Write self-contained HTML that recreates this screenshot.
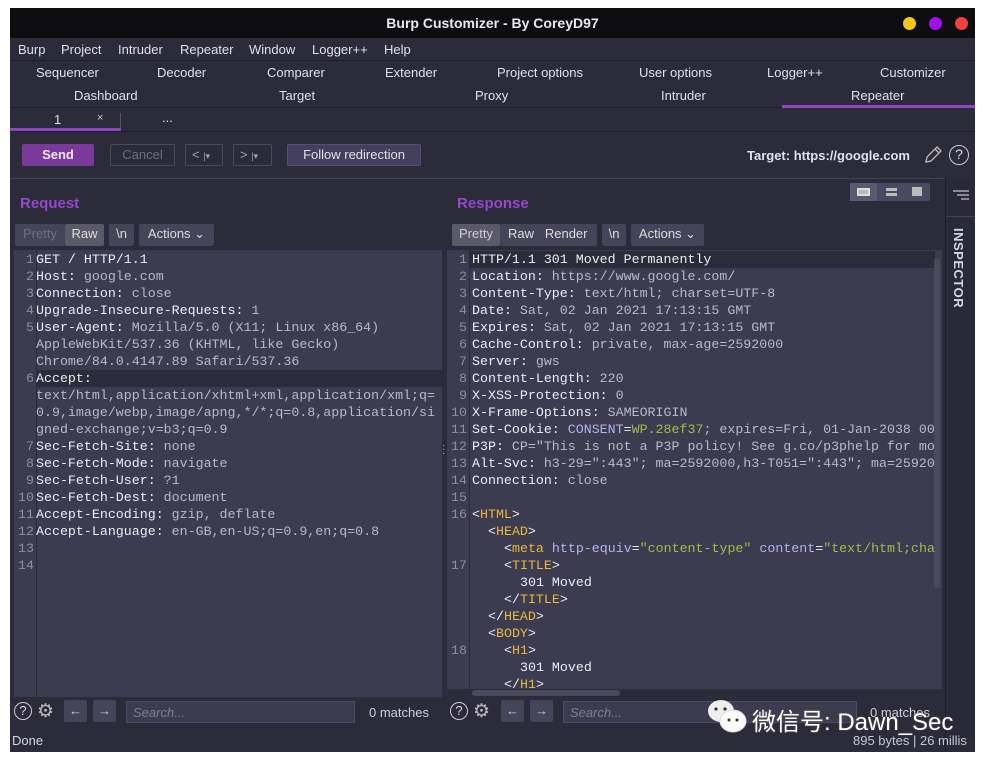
<!DOCTYPE html>
<html><head><meta charset="utf-8"><style>
*{margin:0;padding:0;box-sizing:border-box}
body{width:985px;height:763px;background:#fff;position:relative;overflow:hidden;font-family:"Liberation Sans",sans-serif;font-size:13px;color:#d8d8e2}
.a{position:absolute;white-space:nowrap}
.win{position:absolute;left:10px;top:8px;width:965px;height:744px;background:#2c2b3a;overflow:hidden}
.mono{font-family:"Liberation Mono","DejaVu Sans Mono",monospace;font-size:13.3px;line-height:17px}
.btn{position:absolute;height:22px;border:1px solid #4a4960;border-radius:2px;text-align:center;line-height:20px}
.ed{position:absolute;background:#3c3b50;overflow:hidden}
.ln{position:absolute;left:0;width:20px;text-align:right;color:#8e8ea0}
.tx{position:absolute;white-space:pre}
.k{color:#ececf4}.v{color:#b9b9c8}.t{color:#e8b93a}.g{color:#a2bd4c}.b{color:#aeb6ee}
.sm{font-size:13px;color:#e0e0ea}
</style></head><body>
<div class="win">
<div class="a" style="left:0;top:0;width:965px;height:30px;background:#0e0e11"></div>
<div class="a" style="left:0;top:7px;width:965px;text-align:center;font-weight:bold;color:#e8e8ee;font-size:14px">Burp Customizer - By CoreyD97</div>
<div class="a" style="left:893px;top:9px;width:13px;height:13px;border-radius:50%;background:#f5c518"></div>
<div class="a" style="left:919px;top:9px;width:13px;height:13px;border-radius:50%;background:#a010e8"></div>
<div class="a" style="left:945px;top:9px;width:13px;height:13px;border-radius:50%;background:#f04040"></div>
<div class="a sm" style="left:8px;top:34px">Burp</div>
<div class="a sm" style="left:51px;top:34px">Project</div>
<div class="a sm" style="left:108px;top:34px">Intruder</div>
<div class="a sm" style="left:170px;top:34px">Repeater</div>
<div class="a sm" style="left:239px;top:34px">Window</div>
<div class="a sm" style="left:302px;top:34px">Logger++</div>
<div class="a sm" style="left:374px;top:34px">Help</div>
<div class="a" style="left:0;top:52px;width:965px;height:1px;background:#1e1d28"></div>
<div class="a sm" style="left:26px;top:57px">Sequencer</div>
<div class="a sm" style="left:147px;top:57px">Decoder</div>
<div class="a sm" style="left:257px;top:57px">Comparer</div>
<div class="a sm" style="left:375px;top:57px">Extender</div>
<div class="a sm" style="left:487px;top:57px">Project options</div>
<div class="a sm" style="left:629px;top:57px">User options</div>
<div class="a sm" style="left:757px;top:57px">Logger++</div>
<div class="a sm" style="left:870px;top:57px">Customizer</div>
<div class="a sm" style="left:64px;top:80px">Dashboard</div>
<div class="a sm" style="left:269px;top:80px">Target</div>
<div class="a sm" style="left:465px;top:80px">Proxy</div>
<div class="a sm" style="left:651px;top:80px">Intruder</div>
<div class="a sm" style="left:841px;top:80px">Repeater</div>
<div class="a" style="left:0;top:99px;width:965px;height:1px;background:#1e1d28"></div>
<div class="a" style="left:772px;top:97px;width:193px;height:3px;background:#9046c4"></div>
<div class="a sm" style="left:44px;top:104px">1</div>
<div class="a" style="left:87px;top:104px;font-size:11px;color:#ccc">×</div>
<div class="a" style="left:110px;top:105px;width:1px;height:17px;background:#55546a"></div>
<div class="a sm" style="left:152px;top:102px">...</div>
<div class="a" style="left:0;top:120px;width:111px;height:3px;background:#9046c4"></div>
<div class="a" style="left:0;top:123px;width:965px;height:1px;background:#1e1d28"></div>
<div class="btn" style="left:12px;top:136px;width:72px;background:#7a3a9c;border-color:#7a3a9c;font-weight:bold;color:#f0e8f6">Send</div>
<div class="btn" style="left:100px;top:136px;width:65px;color:#6e6d80">Cancel</div>
<div class="btn" style="left:175px;top:136px;width:38px;color:#a0a0b0;text-align:left;padding-left:6px">&lt; <span style="font-size:9px">|▾</span></div>
<div class="btn" style="left:223px;top:136px;width:39px;color:#a0a0b0;text-align:left;padding-left:6px">&gt; <span style="font-size:9px">|▾</span></div>
<div class="btn" style="left:277px;top:136px;width:134px;background:#433f5c;border-color:#55506e;color:#e0e0ea">Follow redirection</div>
<div class="a" style="left:737px;top:140px;font-weight:bold;color:#e0e0ea">Target: https://google.com</div>
<svg class="a" style="left:913px;top:137px" width="20" height="20" viewBox="0 0 20 20"><path d="M3 17 L4 12 L14 2 L18 6 L8 16 Z M12 4 L16 8" fill="none" stroke="#bbb" stroke-width="1.3"/></svg>
<div class="a" style="left:939px;top:137px;width:20px;height:20px;border:1.5px solid #ccc;border-radius:50%;text-align:center;line-height:17px;color:#ddd;font-size:14px">?</div>
<div class="a" style="left:0;top:170px;width:965px;height:1px;background:#444358"></div>
<div class="a" style="left:935px;top:170px;width:1px;height:574px;background:#1e1d28"></div>
<div class="a" style="left:936px;top:170px;width:29px;height:560px;background:#2a2938"></div>
<div class="a" style="left:936px;top:208px;width:29px;height:1px;background:#444358"></div>
<svg class="a" style="left:942px;top:182px" width="18" height="12"><path d="M1 1H17M5 5H17M9 9H17" stroke="#aaa" stroke-width="1.5"/></svg>
<div class="a" style="left:941px;top:220px;writing-mode:vertical-rl;font-weight:bold;color:#d6d6e0;font-size:13px;letter-spacing:0.5px">INSPECTOR</div>
<div class="a" style="left:840px;top:175px;width:80px;height:18px;background:#4a4960;border-radius:2px"></div>
<div class="a" style="left:840px;top:175px;width:27px;height:18px;background:#5b5a70"></div>
<div class="a" style="left:847px;top:180px;width:13px;height:8px;border:2px solid #ddd;background:#bbb"></div>
<div class="a" style="left:876px;top:180px;width:11px;height:8px;border-top:3px solid #bbb;border-bottom:3px solid #bbb"></div>
<div class="a" style="left:902px;top:179px;width:10px;height:9px;background:#bbb"></div>
<div class="a" style="left:10px;top:187px;font-weight:bold;color:#9448cc;font-size:15px">Request</div>
<div class="a" style="left:447px;top:187px;font-weight:bold;color:#9448cc;font-size:15px">Response</div>
<div class="btn" style="left:5px;top:216px;width:50px;background:#454459;border:none;color:#6f6e82">Pretty</div>
<div class="btn" style="left:55px;top:216px;width:39px;background:#5b5a68;border:none;color:#ddd">Raw</div>
<div class="btn" style="left:99px;top:216px;width:25px;background:#454459;border:none;color:#ddd">\n</div>
<div class="btn" style="left:129px;top:216px;width:75px;background:#454459;border:none;color:#ddd">Actions ⌄</div>
<div class="btn" style="left:442px;top:216px;width:48px;background:#5b5a68;border:none;color:#ccc">Pretty</div>
<div class="btn" style="left:490px;top:216px;width:97px;background:#454459;border:none;color:#ddd;text-align:left;padding-left:8px">Raw &nbsp;&nbsp;Render</div>
<div class="btn" style="left:592px;top:216px;width:24px;background:#454459;border:none;color:#ddd">\n</div>
<div class="btn" style="left:621px;top:216px;width:73px;background:#454459;border:none;color:#ddd">Actions ⌄</div>

<div class="ed mono" style="left:4px;top:242px;width:428px;height:447px">
<div class="a" style="left:22px;top:0;width:1px;height:447px;background:#2c2b3a"></div>
<div class="a" style="left:23px;top:120px;width:405px;height:17px;background:#2c2b3a"></div>
<div class="ln" style="top:1px">1</div><div class="tx k" style="left:22px;top:1px">GET / HTTP/1.1</div>
<div class="ln" style="top:18px">2</div><div class="tx" style="left:22px;top:18px"><span class="k">Host:</span><span class="v"> google.com</span></div>
<div class="ln" style="top:35px">3</div><div class="tx" style="left:22px;top:35px"><span class="k">Connection:</span><span class="v"> close</span></div>
<div class="ln" style="top:52px">4</div><div class="tx" style="left:22px;top:52px"><span class="k">Upgrade-Insecure-Requests:</span><span class="v"> 1</span></div>
<div class="ln" style="top:69px">5</div><div class="tx" style="left:22px;top:69px"><span class="k">User-Agent:</span><span class="v"> Mozilla/5.0 (X11; Linux x86_64)
AppleWebKit/537.36 (KHTML, like Gecko)
Chrome/84.0.4147.89 Safari/537.36</span></div>
<div class="ln" style="top:120px">6</div><div class="tx" style="left:22px;top:120px"><span class="k">Accept:</span><span class="v">
text/html,application/xhtml+xml,application/xml;q=
0.9,image/webp,image/apng,*/*;q=0.8,application/si
gned-exchange;v=b3;q=0.9</span></div>
<div class="ln" style="top:188px">7</div><div class="tx" style="left:22px;top:188px"><span class="k">Sec-Fetch-Site:</span><span class="v"> none</span></div>
<div class="ln" style="top:205px">8</div><div class="tx" style="left:22px;top:205px"><span class="k">Sec-Fetch-Mode:</span><span class="v"> navigate</span></div>
<div class="ln" style="top:222px">9</div><div class="tx" style="left:22px;top:222px"><span class="k">Sec-Fetch-User:</span><span class="v"> ?1</span></div>
<div class="ln" style="top:239px">10</div><div class="tx" style="left:22px;top:239px"><span class="k">Sec-Fetch-Dest:</span><span class="v"> document</span></div>
<div class="ln" style="top:256px">11</div><div class="tx" style="left:22px;top:256px"><span class="k">Accept-Encoding:</span><span class="v"> gzip, deflate</span></div>
<div class="ln" style="top:273px">12</div><div class="tx" style="left:22px;top:273px"><span class="k">Accept-Language:</span><span class="v"> en-GB,en-US;q=0.9,en;q=0.8</span></div>
<div class="ln" style="top:290px">13</div>
<div class="ln" style="top:307px">14</div>
</div>
<div class="a" style="left:432px;top:436px;color:#aaa;font-size:10px;line-height:4px">·<br>·<br>·</div>

<div class="ed mono" style="left:437px;top:242px;width:495px;height:447px">
<div class="a" style="left:22px;top:0;width:1px;height:447px;background:#2c2b3a"></div>
<div class="a" style="left:23px;top:1px;width:465px;height:17px;background:#2c2b3a"></div>
<div class="a" style="left:487px;top:8px;width:6px;height:330px;background:#4a495e;border-radius:3px"></div>
<div class="ln" style="top:1px">1</div><div class="tx k" style="left:25px;top:1px">HTTP/1.1 301 Moved Permanently</div>
<div class="ln" style="top:18px">2</div><div class="tx" style="left:25px;top:18px"><span class="k">Location:</span><span class="v"> https://www.google.com/</span></div>
<div class="ln" style="top:35px">3</div><div class="tx" style="left:25px;top:35px"><span class="k">Content-Type:</span><span class="v"> text/html; charset=UTF-8</span></div>
<div class="ln" style="top:52px">4</div><div class="tx" style="left:25px;top:52px"><span class="k">Date:</span><span class="v"> Sat, 02 Jan 2021 17:13:15 GMT</span></div>
<div class="ln" style="top:69px">5</div><div class="tx" style="left:25px;top:69px"><span class="k">Expires:</span><span class="v"> Sat, 02 Jan 2021 17:13:15 GMT</span></div>
<div class="ln" style="top:86px">6</div><div class="tx" style="left:25px;top:86px"><span class="k">Cache-Control:</span><span class="v"> private, max-age=2592000</span></div>
<div class="ln" style="top:103px">7</div><div class="tx" style="left:25px;top:103px"><span class="k">Server:</span><span class="v"> gws</span></div>
<div class="ln" style="top:120px">8</div><div class="tx" style="left:25px;top:120px"><span class="k">Content-Length:</span><span class="v"> 220</span></div>
<div class="ln" style="top:137px">9</div><div class="tx" style="left:25px;top:137px"><span class="k">X-XSS-Protection:</span><span class="v"> 0</span></div>
<div class="ln" style="top:154px">10</div><div class="tx" style="left:25px;top:154px"><span class="k">X-Frame-Options:</span><span class="v"> SAMEORIGIN</span></div>
<div class="ln" style="top:171px">11</div><div class="tx" style="left:25px;top:171px"><span class="k">Set-Cookie:</span> <span class="b">CONSENT</span><span class="k">=</span><span class="g">WP.28ef37</span><span class="v">; expires=Fri, 01-Jan-2038 00</span></div>
<div class="ln" style="top:188px">12</div><div class="tx" style="left:25px;top:188px"><span class="k">P3P:</span><span class="v"> CP="This is not a P3P policy! See g.co/p3phelp for mo</span></div>
<div class="ln" style="top:205px">13</div><div class="tx" style="left:25px;top:205px"><span class="k">Alt-Svc:</span><span class="v"> h3-29=":443"; ma=2592000,h3-T051=":443"; ma=25920</span></div>
<div class="ln" style="top:222px">14</div><div class="tx" style="left:25px;top:222px"><span class="k">Connection:</span><span class="v"> close</span></div>
<div class="ln" style="top:239px">15</div>
<div class="ln" style="top:256px">16</div><div class="tx k" style="left:25px;top:256px">&lt;<span class="t">HTML</span>&gt;</div>
<div class="tx k" style="left:41px;top:273px">&lt;<span class="t">HEAD</span>&gt;</div>
<div class="tx k" style="left:57px;top:290px">&lt;<span class="t">meta</span> <span class="b">http-equiv</span>=<span class="g">"content-type"</span> <span class="b">content</span>=<span class="g">"text/html;cha</span></div>
<div class="ln" style="top:307px">17</div><div class="tx k" style="left:57px;top:307px">&lt;<span class="t">TITLE</span>&gt;</div>
<div class="tx k" style="left:73px;top:324px">301 Moved</div>
<div class="tx k" style="left:57px;top:341px">&lt;/<span class="t">TITLE</span>&gt;</div>
<div class="tx k" style="left:41px;top:358px">&lt;/<span class="t">HEAD</span>&gt;</div>
<div class="tx k" style="left:41px;top:375px">&lt;<span class="t">BODY</span>&gt;</div>
<div class="ln" style="top:392px">18</div><div class="tx k" style="left:57px;top:392px">&lt;<span class="t">H1</span>&gt;</div>
<div class="tx k" style="left:73px;top:409px">301 Moved</div>
<div class="tx k" style="left:57px;top:426px">&lt;/<span class="t">H1</span>&gt;</div>
<div class="a" style="left:0;top:439px;width:495px;height:8px;background:#2c2b3a"></div>
<div class="a" style="left:25px;top:440px;width:148px;height:6px;background:#4a495e;border-radius:3px"></div>
</div>

<div class="a" style="left:4px;top:694px;width:18px;height:18px;border:1.3px solid #ccc;border-radius:50%;text-align:center;line-height:16px;color:#ddd;font-size:13px">?</div>
<div class="a" style="left:27px;top:692px;font-size:19px;color:#bbb">⚙</div>
<div class="a" style="left:54px;top:692px;width:23px;height:22px;background:#454459;border-radius:2px;text-align:center;color:#ccc;line-height:21px">←</div>
<div class="a" style="left:83px;top:692px;width:23px;height:22px;background:#454459;border-radius:2px;text-align:center;color:#ccc;line-height:21px">→</div>
<div class="a" style="left:116px;top:693px;width:229px;height:22px;background:#3c3b50;border:1px solid #4d4c62;color:#7e7d90;font-style:italic;padding:3px 6px">Search...</div>
<div class="a" style="left:359px;top:697px;color:#d0d0dc">0 matches</div>
<div class="a" style="left:440px;top:694px;width:18px;height:18px;border:1.3px solid #ccc;border-radius:50%;text-align:center;line-height:16px;color:#ddd;font-size:13px">?</div>
<div class="a" style="left:463px;top:692px;font-size:19px;color:#bbb">⚙</div>
<div class="a" style="left:491px;top:692px;width:23px;height:22px;background:#454459;border-radius:2px;text-align:center;color:#ccc;line-height:21px">←</div>
<div class="a" style="left:520px;top:692px;width:23px;height:22px;background:#454459;border-radius:2px;text-align:center;color:#ccc;line-height:21px">→</div>
<div class="a" style="left:553px;top:693px;width:294px;height:22px;background:#3c3b50;border:1px solid #4d4c62;color:#7e7d90;font-style:italic;padding:3px 6px">Search...</div>
<div class="a" style="left:860px;top:697px;color:#d0d0dc">0 matches</div>
<div class="a" style="left:2px;top:725px;color:#d6d6e0">Done</div>
<div class="a" style="left:843px;top:725px;color:#c6c6d2">895 bytes | 26 millis</div>
</div>
<svg class="a" style="left:706px;top:697px" width="42" height="38" viewBox="0 0 42 38"><ellipse cx="15" cy="14" rx="13" ry="11" fill="#eee"/><ellipse cx="27" cy="24" rx="13" ry="11" fill="#fafafa" stroke="#ddd"/><circle cx="10" cy="12" r="1.6" fill="#333"/><circle cx="19" cy="12" r="1.6" fill="#333"/><circle cx="23" cy="23" r="1.5" fill="#333"/><circle cx="31" cy="23" r="1.5" fill="#333"/></svg>
<div class="a" style="left:752px;top:702px;font-size:24px;color:#fff;font-family:'Liberation Sans','Noto Sans CJK SC',sans-serif;text-shadow:0 0 2px #555">微信号: Dawn_Sec</div>
</body></html>
